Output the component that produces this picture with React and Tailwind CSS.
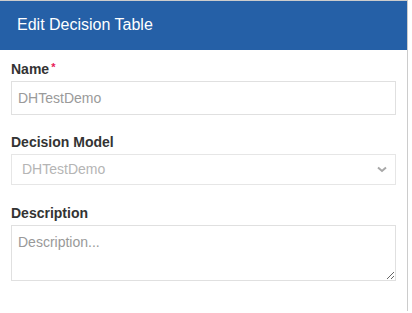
import React from "react";

export default function App() {
  return (
    <div className="h-[313px] bg-white font-['Liberation_Sans',Arial,sans-serif]">
      <div className="w-[408px] h-[311px] border-t border-r border-[#cccccc] bg-white">
        <div className="flex h-[49px] items-center bg-[#2560a7] pl-[17px] pb-[2px] text-[16px] text-white">
          Edit Decision Table
        </div>

        <div className="px-[11px] pt-[9px]">
          <label className="flex h-[20px] items-start text-[14px] leading-[20px] font-bold text-[#333333]">
            Name
            <span className="ml-[2px] mt-[1px] text-[11px] leading-[14px] text-[#e8205a]">*</span>
          </label>
          <input
            readOnly
            value="DHTestDemo"
            className="mt-[2px] block h-[34px] w-full border border-[#e0e0e0] px-[6px] font-['Liberation_Sans',Arial,sans-serif] text-[14px] text-[#9a9a9a] outline-none"
          />

          <label className="mt-[17px] block h-[20px] text-[14px] leading-[20px] font-bold text-[#333333]">
            Decision Model
          </label>
          <div className="mt-[2px] flex h-[31px] items-center justify-between border border-[#e6e6e6] pl-[10px] pr-[8px] text-[14px] text-[#b5b5b5]">
            <span>DHTestDemo</span>
            <svg width="10" height="7" viewBox="0 0 10 7" className="text-[#a8a8a8]">
              <path d="M1 1.5 L5 5 L9 1.5" fill="none" stroke="currentColor" strokeWidth="2" />
            </svg>
          </div>

          <label className="mt-[18px] block h-[20px] text-[14px] leading-[20px] font-bold text-[#333333]">
            Description
          </label>
          <textarea
            placeholder="Description..."
            className="mt-[2px] block h-[56px] w-full border border-[#e0e0e0] px-[6px] py-[6px] font-['Liberation_Sans',Arial,sans-serif] text-[14px] leading-[20px] text-[#555555] placeholder:text-[#999999] outline-none"
          />
        </div>
      </div>
    </div>
  );
}
